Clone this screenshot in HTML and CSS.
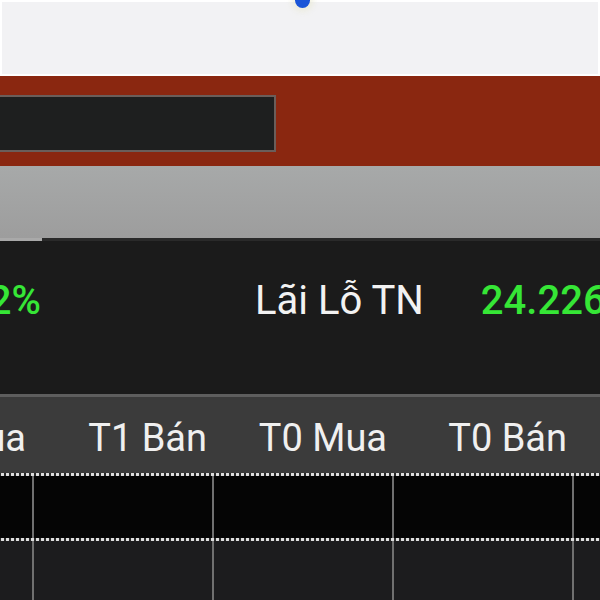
FILE: index.html
```html
<!DOCTYPE html>
<html lang="vi">
<head>
    <meta charset="UTF-8">
    <meta name="viewport" content="width=device-width, initial-scale=1.0">
    <title>Lãi Lỗ</title>
    <link rel="stylesheet" href="styles.css">
</head>
<body>
    <div class="top-bar">
        <span class="loading-dot"></span>
    </div>

    <div class="search-band">
        <div class="search-box"></div>
    </div>

    <div class="toolbar"></div>
    <div class="tab-strip">
        <div class="tab-active"></div>
    </div>

    <div class="summary">
        <div class="summary-row">
            <div class="pct"><span class="green">1.42%</span></div>
            <div class="label">Lãi Lỗ TN</div>
            <div class="value green">24.226.000</div>
        </div>
    </div>

    <div class="grid">
        <div class="grid-head">
            <div class="cell first">Mua</div>
            <div class="cell">T1 Bán</div>
            <div class="cell">T0 Mua</div>
            <div class="cell">T0 Bán</div>
            <div class="cell last"></div>
        </div>
        <div class="dots"></div>
        <div class="grid-row black">
            <div class="cell first"></div>
            <div class="cell"></div>
            <div class="cell"></div>
            <div class="cell"></div>
            <div class="cell last"></div>
        </div>
        <div class="dots"></div>
        <div class="grid-row">
            <div class="cell first"></div>
            <div class="cell"></div>
            <div class="cell"></div>
            <div class="cell"></div>
            <div class="cell last"></div>
        </div>
    </div>
</body>
</html>
```

FILE: styles.css
```css
* {
    margin: 0;
    padding: 0;
    box-sizing: border-box;
}

html, body {
    width: 600px;
    height: 600px;
    overflow: hidden;
}

body {
    font-family: Roboto, "Liberation Sans", sans-serif;
    background: #1c1c1c;
    color: #f0f0f0;
}

.top-bar {
    position: relative;
    height: 76px;
    background: #f2f2f4;
    border: 2px solid #ffffff;
}

.loading-dot {
    position: absolute;
    left: 293px;
    top: -9px;
    width: 15px;
    height: 15px;
    border-radius: 50%;
    background: #1a55d8;
    box-shadow: 0 0 6px 3px rgba(230, 230, 200, 0.6);
}

.search-band {
    height: 90px;
    padding-top: 19px;
    background: #8a2710;
}

.search-box {
    width: 276px;
    height: 57px;
    background: #1e1f1f;
    border: 2px solid #6a5e5a;
    border-left: none;
}

.toolbar {
    height: 72px;
    background: linear-gradient(#a7a9a9, #9d9d9d);
}

.tab-strip {
    height: 3px;
    background: #2a2a2a;
}

.tab-active {
    width: 42px;
    height: 3px;
    background: #a9a9a9;
}

.summary {
    height: 156px;
    background: #1b1b1b;
    border-bottom: 3px solid #5e5e5e;
}

.summary-row {
    display: flex;
    align-items: center;
    padding-top: 39px;
    height: 79px;
    font-size: 40px;
    white-space: nowrap;
}

.summary-row > div {
    flex-shrink: 0;
}

.pct {
    width: 41px;
    display: flex;
    justify-content: flex-end;
    overflow: hidden;
}

.pct span {
    flex-shrink: 0;
}

.green {
    color: #36e636;
    font-weight: 500;
}

.label {
    margin-left: 214px;
    color: #f2f2f2;
}

.value {
    margin-left: 57px;
}

.grid-head,
.grid-row {
    display: grid;
    grid-template-columns: 34px 180px 180px 180px 1fr;
}

.grid-head {
    height: 76px;
    padding-top: 6px;
    background: #3b3b3b;
    align-items: center;
    font-size: 38px;
    white-space: nowrap;
}

.grid-head .cell {
    display: flex;
    justify-content: flex-end;
    padding-right: 7px;
    overflow: hidden;
}

.grid-head .first {
    padding-right: 8px;
}

.grid-row {
    height: 62px;
    background: #1c1c1e;
}

.grid-row.black {
    background: #050505;
}

.grid-row .cell {
    border-right: 2px solid #707070;
}

.grid-row .last {
    border-right: none;
}

.grid > .grid-row:last-child {
    height: 60px;
}

.dots {
    height: 3px;
    background-color: #2a2a2a;
    background-image: radial-gradient(circle, #e0e0e0 1.4px, transparent 1.9px);
    background-size: 5px 3px;
    background-repeat: repeat-x;
}
```
